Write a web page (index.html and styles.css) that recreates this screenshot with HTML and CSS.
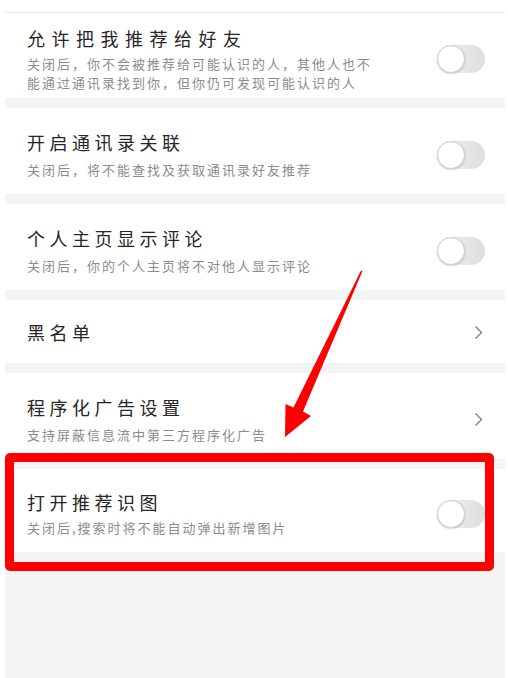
FILE: index.html
```html
<!DOCTYPE html>
<html lang="zh-CN">
<head>
<meta charset="utf-8">
<title>隐私设置</title>
<link rel="stylesheet" href="styles.css">
</head>
<body>
<div class="page">
  <div class="list">
    <div class="row row-first">
      <div class="text">
        <div class="title t-wide">允许把我推荐给好友</div>
        <div class="sub sub-tight">关闭后，你不会被推荐给可能认识的人，其他人也不<br>能通过通讯录找到你，但你仍可发现可能认识的人</div>
      </div>
      <div class="switch"></div>
    </div>
    <div class="row">
      <div class="text">
        <div class="title">开启通讯录关联</div>
        <div class="sub">关闭后，将不能查找及获取通讯录好友推荐</div>
      </div>
      <div class="switch"></div>
    </div>
    <div class="row">
      <div class="text">
        <div class="title">个人主页显示评论</div>
        <div class="sub">关闭后，你的个人主页将不对他人显示评论</div>
      </div>
      <div class="switch"></div>
    </div>
    <div class="row row-single">
      <div class="text">
        <div class="title">黑名单</div>
      </div>
      <svg class="chev" width="9" height="15" viewBox="0 0 9 15"><polyline points="1.5,1.5 7.5,7.5 1.5,13.5" fill="none" stroke="#8a8a8a" stroke-width="1.5"/></svg>
    </div>
    <div class="row">
      <div class="text">
        <div class="title">程序化广告设置</div>
        <div class="sub">支持屏蔽信息流中第三方程序化广告</div>
      </div>
      <svg class="chev" width="9" height="15" viewBox="0 0 9 15"><polyline points="1.5,1.5 7.5,7.5 1.5,13.5" fill="none" stroke="#8a8a8a" stroke-width="1.5"/></svg>
    </div>
    <div class="row row-last">
      <div class="text">
        <div class="title">打开推荐识图</div>
        <div class="sub sub-tight">关闭后,搜索时将不能自动弹出新增图片</div>
      </div>
      <div class="switch"></div>
    </div>
  </div>
</div>
<div class="highlight"></div>
<svg class="arrow" width="508" height="678" viewBox="0 0 508 678">
  <polygon points="362.5,271 303,411.5 311,416 285,437 285.5,404 293.5,407.5 361,270.5" fill="#ff0000"/>
</svg>
</body>
</html>
```

FILE: styles.css
```css
html, body {
  margin: 0;
  padding: 0;
  background: #ffffff;
}

body {
  width: 508px;
  height: 678px;
  overflow: hidden;
  position: relative;
  font-family: "Noto Sans CJK SC", "Noto Sans", sans-serif;
}

.page {
  margin: 12px 0 0 5px;
  width: 500px;
}

.list {
  background: #f4f4f4;
  min-height: 666px;
  display: flex;
  flex-direction: column;
  gap: 10px;
}

.row {
  background: #ffffff;
  display: flex;
  align-items: center;
  justify-content: space-between;
  padding: 22px 20px 15px 22px;
}

.row-first {
  border-top: 1px solid #e9e9e9;
  padding-top: 13px;
  padding-bottom: 6px;
}

.row-single {
  padding-top: 20px;
  padding-bottom: 19px;
}

.row-last {
  padding-top: 21px;
  padding-bottom: 15px;
}

.title {
  font-size: 18px;
  line-height: 24px;
  letter-spacing: 4.5px;
  color: #262626;
}

.t-wide {
  letter-spacing: 6.5px;
}

.sub {
  margin-top: 6px;
  font-size: 13px;
  line-height: 19px;
  letter-spacing: 2px;
  color: #8c8c8c;
}

.sub-tight {
  margin-top: 4px;
}

.switch {
  width: 48px;
  height: 28px;
  border-radius: 14px;
  background: linear-gradient(to right, #f2f2f2, #dedede);
  position: relative;
  flex: none;
}

.switch::before {
  content: "";
  position: absolute;
  left: 0;
  top: 0;
  width: 26px;
  height: 26px;
  border-radius: 50%;
  background: #ffffff;
  border: 1px solid #cfcfcf;
  box-shadow: 0 1px 2px rgba(0, 0, 0, 0.18);
}

.chev {
  flex: none;
  margin-right: 2px;
}

.highlight {
  position: absolute;
  left: 5px;
  top: 453px;
  width: 489px;
  height: 118px;
  box-sizing: border-box;
  border: 9px solid #ff0000;
  border-radius: 5px;
}

.arrow {
  position: absolute;
  left: 0;
  top: 0;
  pointer-events: none;
}
```
